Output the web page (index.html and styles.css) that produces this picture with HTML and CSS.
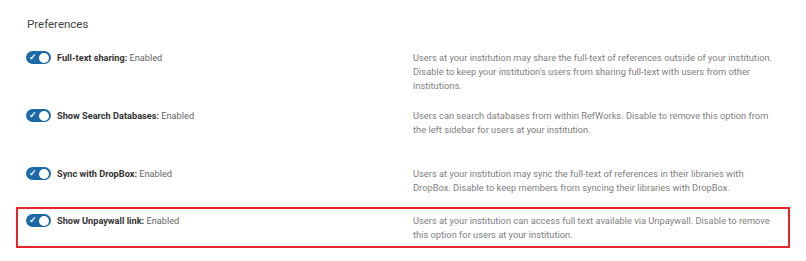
FILE: index.html
```html
<!DOCTYPE html>
<html lang="en">
<head>
    <meta charset="UTF-8">
    <title>Preferences</title>
    <link rel="stylesheet" href="styles.css">
</head>
<body>
    <div class="panel">
        <h2 class="title">Preferences</h2>

        <div class="pref">
            <div class="pref-name">
                <span class="toggle on"><span class="check">&#10003;</span><span class="knob"></span></span>
                <span><b>Full-text sharing:</b> Enabled</span>
            </div>
            <p class="pref-desc">Users at your institution may share the full-text of references outside of your institution. Disable to keep your institution's users from sharing full-text with users from other institutions.</p>
        </div>

        <div class="pref">
            <div class="pref-name">
                <span class="toggle on"><span class="check">&#10003;</span><span class="knob"></span></span>
                <span><b>Show Search Databases:</b> Enabled</span>
            </div>
            <p class="pref-desc">Users can search databases from within RefWorks. Disable to remove this option from the left sidebar for users at your institution.</p>
        </div>

        <div class="pref">
            <div class="pref-name">
                <span class="toggle on"><span class="check">&#10003;</span><span class="knob"></span></span>
                <span><b>Sync with DropBox:</b> Enabled</span>
            </div>
            <p class="pref-desc">Users at your institution may sync the full-text of references in their libraries with DropBox. Disable to keep members from syncing their libraries with DropBox.</p>
        </div>

        <div class="pref highlight">
            <div class="pref-name">
                <span class="toggle on"><span class="check">&#10003;</span><span class="knob"></span></span>
                <span><b>Show Unpaywall link:</b> Enabled</span>
            </div>
            <p class="pref-desc">Users at your institution can access full text available via Unpaywall. Disable to remove this option for users at your institution.</p>
        </div>
    </div>
</body>
</html>
```

FILE: styles.css
```css
body {
    margin: 0;
    background: #fff;
    font-family: Roboto, "Liberation Sans", Arial, sans-serif;
    color: #333;
}
.panel {
    padding: 16px 16px 0 16px;
    width: 774px;
}
.title {
    margin: 0 0 0 11px;
    font-size: 11.5px;
    font-weight: 400;
    line-height: 16px;
    color: #444;
}
.pref {
    display: grid;
    grid-template-columns: 387px 1fr;
    height: 58px;
    padding: 0 8px;
    border: 2px solid transparent;
    box-sizing: border-box;
}
.pref:first-of-type {
    margin-top: 17px;
}
.pref-name {
    display: flex;
    align-items: flex-start;
    gap: 6px;
    font-size: 9.2px;
    line-height: 14px;
    color: #666;
}
.pref-name b {
    color: #333;
    font-weight: 700;
}
.pref-desc {
    margin: 0;
    max-width: 365px;
    font-size: 9.3px;
    line-height: 14px;
    color: #808080;
}
.toggle {
    position: relative;
    flex: none;
    width: 25px;
    height: 13px;
    border-radius: 7px;
    background: #ccc;
}
.toggle.on {
    background: #1c69a8;
}
.check {
    position: absolute;
    left: 3px;
    top: 0;
    font-size: 9px;
    line-height: 13px;
    color: #fff;
    font-weight: 700;
}
.knob {
    position: absolute;
    right: 2px;
    top: 1.5px;
    width: 10px;
    height: 10px;
    border-radius: 50%;
    background: #fff;
}
.highlight {
    height: 41px;
    margin-top: -16px;
    padding-top: 5px;
    border-color: #e8232b;
}
```
